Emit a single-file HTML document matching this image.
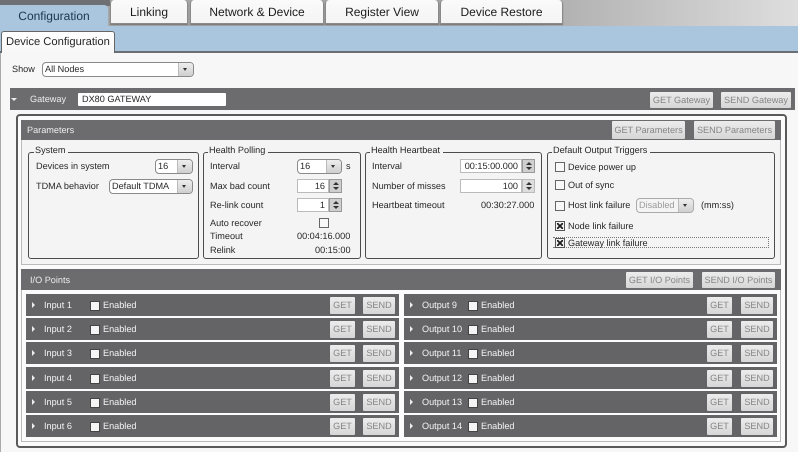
<!DOCTYPE html>
<html><head><meta charset="utf-8"><style>
html,body{margin:0;padding:0}
body{width:798px;height:452px;overflow:hidden;position:relative;background:#f7f7f7;font-family:"Liberation Sans",Arial,sans-serif;font-size:9.15px;color:#262626;text-rendering:geometricPrecision;filter:blur(.3px)}
div,span{position:absolute;box-sizing:border-box}
.t{white-space:nowrap;line-height:12px}
.tab{top:0;height:24px;background:linear-gradient(#fafafa,#f4f4f4);border:1px solid #8a8a8a;border-top:0;border-radius:4px 4px 0 0;font-size:12px;line-height:24px;text-align:center;color:#1c1c1c;box-shadow:0 1px 1px #777}
.bar{background:#6c6c6e}
.btn{background:linear-gradient(#ececec,#d6d6d6);color:#858585;text-align:center;font-size:9.15px;line-height:16px;white-space:nowrap;border-radius:1px}
.fs{border:1px solid #4c4c4c;border-radius:3px;top:152px;height:107px}
.lg{top:144px;background:#f4f4f4;padding:0 3px 0 1px;line-height:12px;white-space:nowrap;color:#262626}
.sel{background:#fff;border:1px solid #8a8a8a;border-radius:4px;overflow:hidden;line-height:11px;padding-left:2px;white-space:nowrap;color:#262626}
.sel i{position:absolute;right:0;top:0;bottom:0;width:14px;background:linear-gradient(#eee,#cfcfcf);border-left:1px solid #bbb}
.sel i:after{content:"";position:absolute;left:4px;top:5px;border:2.5px solid transparent;border-top:3px solid #333;border-bottom:0}
.num{background:#fff;border:1px solid #bbb;text-align:right;padding-right:3px;line-height:12px;color:#262626}
.sp{width:13px;height:14px;background:#cfcfcf;border:1px solid #999}
.sp:before{content:"";position:absolute;left:2.5px;top:1.5px;border:3px solid transparent;border-bottom:3.5px solid #333;border-top:0}
.sp:after{content:"";position:absolute;left:2.5px;top:7px;border:3px solid transparent;border-top:3.5px solid #333;border-bottom:0}
.cb{width:10px;height:10px;background:#f8f8f8;border:1px solid #666}
.cb.x{background:#eee;border-color:#555}
.cb.x:after{content:"";position:absolute;left:1px;top:1px;width:6px;height:6px;background:linear-gradient(45deg,transparent 40%,#222 40%,#222 60%,transparent 60%),linear-gradient(-45deg,transparent 40%,#222 40%,#222 60%,transparent 60%)}
.row{height:22px;background:#646466}
.row b{position:absolute;left:6px;top:8px;border:3px solid transparent;border-left:3px solid #eee;border-right:0}
.row .n{left:18px;top:5px;color:#f4f4f4;line-height:12px;white-space:nowrap}
.row .en{top:5px;color:#f4f4f4;line-height:12px}
.row .c{top:8px;width:8px;height:8px;background:#f4f4f4;box-shadow:0 0 0 1px #444}
.row .g{top:3px;width:25px;height:17px;line-height:16px}
.row .s{top:3px;width:32px;height:17px;line-height:16px}
</style></head><body>
<div style="left:0;top:0;width:798px;height:27px;background:linear-gradient(90deg,#a8a8a8 0,#a4a4a4 65%,#b4b4b4 72%,#dedede 100%)"></div>
<div style="left:0;top:0;width:110px;height:6px;background:#6f7073"></div>
<div class="tab" style="left:110px;width:78px">Linking</div>
<div class="tab" style="left:190px;width:134px">Network &amp; Device</div>
<div class="tab" style="left:325px;width:114px">Register View</div>
<div class="tab" style="left:440px;width:123px">Device Restore</div>
<div style="left:0;top:26px;width:798px;height:27px;background:#a9c6de;border-bottom:2px solid #6b6e72"></div>
<div style="left:0;top:5px;width:108px;height:22px;background:#a9c6de;border-radius:0 4px 0 0;font-size:12px;line-height:23px;text-align:center;color:#1d3550;padding-left:0">Configuration</div>
<div style="left:1px;top:31px;width:114px;height:22px;background:linear-gradient(#fff,#f7f7f7);border:1px solid #666;border-bottom:0;border-radius:3px 3px 0 0;font-size:11.2px;line-height:21px;padding-left:4px;color:#262626;white-space:nowrap">Device Configuration</div>
<div style="left:1px;top:53px;width:797px;height:399px;background:#f7f7f7"></div>
<div style="left:0;top:53px;width:1px;height:399px;background:#aaa"></div>

<div class="t" style="left:12px;top:63px">Show</div>
<div class="sel" style="left:42px;top:62px;width:152px;height:15px;line-height:13px">All Nodes<i></i></div>

<div class="bar" style="left:10px;top:88px;width:785px;height:22px"></div>
<div style="left:11px;top:98px;border:3px solid transparent;border-top:3px solid #eee;border-bottom:0"></div>
<div class="t" style="left:30px;top:93px;color:#eee">Gateway</div>
<div style="left:78px;top:93px;width:148px;height:13px;background:#fff;border-radius:1px;line-height:13px;padding-left:4px;color:#262626;white-space:nowrap">DX80 GATEWAY</div>
<div class="btn" style="left:650px;top:92px;width:63px;height:16px">GET Gateway</div>
<div class="btn" style="left:721px;top:92px;width:70px;height:16px">SEND Gateway</div>

<div style="left:16px;top:114px;width:771px;height:334px;border:2px solid #5a5a5a;border-radius:4px;background:#fbfbfb"></div>
<div style="left:21px;top:120px;width:760px;height:145px;background:#f4f4f4;border:1px solid #bbb"></div>
<div class="bar" style="left:21px;top:120px;width:760px;height:20px"></div>
<div class="t" style="left:27px;top:124px;color:#eee">Parameters</div>
<div class="btn" style="left:612px;top:121px;width:73px;height:18px;line-height:18px">GET Parameters</div>
<div class="btn" style="left:694px;top:121px;width:81px;height:18px;line-height:18px">SEND Parameters</div>

<div class="fs" style="left:28px;width:171px"></div>
<div class="lg" style="left:34px">System</div>
<div class="t" style="left:36px;top:160px">Devices in system</div>
<div class="sel" style="left:155px;top:159px;width:38px;height:15px;line-height:13px">16<i></i></div>
<div class="t" style="left:36px;top:180px">TDMA behavior</div>
<div class="sel" style="left:109px;top:179px;width:84px;height:15px;line-height:13px">Default TDMA<i></i></div>

<div class="fs" style="left:203px;width:158px"></div>
<div class="lg" style="left:208px">Health Polling</div>
<div class="t" style="left:210px;top:160px">Interval</div>
<div class="sel" style="left:297px;top:159px;width:45px;height:15px;line-height:13px">16<i></i></div>
<div class="t" style="left:346px;top:160px">s</div>
<div class="t" style="left:210px;top:180px">Max bad count</div>
<div class="num" style="left:297px;top:179px;width:32px;height:14px">16</div><div class="sp" style="left:329px;top:179px"></div>
<div class="t" style="left:210px;top:199px">Re-link count</div>
<div class="num" style="left:297px;top:198px;width:32px;height:14px">1</div><div class="sp" style="left:329px;top:198px"></div>
<div class="t" style="left:210px;top:217px">Auto recover</div>
<div class="cb" style="left:319px;top:218px"></div>
<div class="t" style="left:210px;top:230px">Timeout</div>
<div class="t" style="left:297px;top:230px">00:04:16.000</div>
<div class="t" style="left:210px;top:244px">Relink</div>
<div class="t" style="left:315px;top:244px">00:15:00</div>

<div class="fs" style="left:365px;width:177px"></div>
<div class="lg" style="left:370px">Health Heartbeat</div>
<div class="t" style="left:372px;top:160px">Interval</div>
<div class="num" style="left:460px;top:159px;width:62px;height:14px">00:15:00.000</div><div class="sp" style="left:522px;top:159px"></div>
<div class="t" style="left:372px;top:180px">Number of misses</div>
<div class="num" style="left:460px;top:179px;width:62px;height:14px">100</div><div class="sp" style="left:522px;top:179px;background:#ddd;border-color:#bbb"></div>
<div class="t" style="left:372px;top:199px">Heartbeat timeout</div>
<div class="t" style="left:481px;top:199px">00:30:27.000</div>

<div class="fs" style="left:547px;width:228px"></div>
<div class="lg" style="left:552px">Default Output Triggers</div>
<div class="cb" style="left:555px;top:162px"></div><div class="t" style="left:568px;top:161px">Device power up</div>
<div class="cb" style="left:555px;top:180px"></div><div class="t" style="left:568px;top:179px">Out of sync</div>
<div class="cb" style="left:555px;top:201px"></div><div class="t" style="left:568px;top:199px">Host link failure</div>
<div class="sel" style="left:636px;top:198px;width:58px;height:15px;line-height:13px;color:#999;border-color:#aaa;background:#f4f4f4">Disabled<i></i></div>
<div class="t" style="left:701px;top:199px">(mm:ss)</div>
<div class="cb x" style="left:555px;top:221px"></div><div class="t" style="left:568px;top:220px">Node link failure</div>
<div style="left:553px;top:237px;width:216px;height:11px;border:1px dotted #777;border-left:0"></div>
<div class="cb x" style="left:555px;top:238px"></div><div class="t" style="left:568px;top:237px">Gateway link failure</div>

<div class="bar" style="left:21px;top:269px;width:760px;height:21px"></div>
<div class="t" style="left:30px;top:274px;color:#eee">I/O Points</div>
<div class="btn" style="left:626px;top:272px;width:67px;height:16px">GET I/O Points</div>
<div class="btn" style="left:702px;top:272px;width:73px;height:16px">SEND I/O Points</div>
<div style="left:21px;top:290px;width:760px;height:152px;border:1px solid #bbb;border-top:0;background:#fbfbfb"></div>

<div class="row" style="left:26px;top:294px;width:373px"><b></b><span class="n">Input 1</span><span class="c" style="left:65px"></span><span class="en" style="left:77px">Enabled</span><span class="btn g" style="left:304px">GET</span><span class="btn s" style="left:337px">SEND</span></div>
<div class="row" style="left:26px;top:318px;width:373px"><b></b><span class="n">Input 2</span><span class="c" style="left:65px"></span><span class="en" style="left:77px">Enabled</span><span class="btn g" style="left:304px">GET</span><span class="btn s" style="left:337px">SEND</span></div>
<div class="row" style="left:26px;top:342px;width:373px"><b></b><span class="n">Input 3</span><span class="c" style="left:65px"></span><span class="en" style="left:77px">Enabled</span><span class="btn g" style="left:304px">GET</span><span class="btn s" style="left:337px">SEND</span></div>
<div class="row" style="left:26px;top:367px;width:373px"><b></b><span class="n">Input 4</span><span class="c" style="left:65px"></span><span class="en" style="left:77px">Enabled</span><span class="btn g" style="left:304px">GET</span><span class="btn s" style="left:337px">SEND</span></div>
<div class="row" style="left:26px;top:391px;width:373px"><b></b><span class="n">Input 5</span><span class="c" style="left:65px"></span><span class="en" style="left:77px">Enabled</span><span class="btn g" style="left:304px">GET</span><span class="btn s" style="left:337px">SEND</span></div>
<div class="row" style="left:26px;top:415px;width:373px"><b></b><span class="n">Input 6</span><span class="c" style="left:65px"></span><span class="en" style="left:77px">Enabled</span><span class="btn g" style="left:304px">GET</span><span class="btn s" style="left:337px">SEND</span></div>

<div class="row" style="left:404px;top:294px;width:373px"><b></b><span class="n">Output 9</span><span class="c" style="left:65px"></span><span class="en" style="left:77px">Enabled</span><span class="btn g" style="left:303px">GET</span><span class="btn s" style="left:337px">SEND</span></div>
<div class="row" style="left:404px;top:318px;width:373px"><b></b><span class="n">Output 10</span><span class="c" style="left:65px"></span><span class="en" style="left:77px">Enabled</span><span class="btn g" style="left:303px">GET</span><span class="btn s" style="left:337px">SEND</span></div>
<div class="row" style="left:404px;top:342px;width:373px"><b></b><span class="n">Output 11</span><span class="c" style="left:65px"></span><span class="en" style="left:77px">Enabled</span><span class="btn g" style="left:303px">GET</span><span class="btn s" style="left:337px">SEND</span></div>
<div class="row" style="left:404px;top:367px;width:373px"><b></b><span class="n">Output 12</span><span class="c" style="left:65px"></span><span class="en" style="left:77px">Enabled</span><span class="btn g" style="left:303px">GET</span><span class="btn s" style="left:337px">SEND</span></div>
<div class="row" style="left:404px;top:391px;width:373px"><b></b><span class="n">Output 13</span><span class="c" style="left:65px"></span><span class="en" style="left:77px">Enabled</span><span class="btn g" style="left:303px">GET</span><span class="btn s" style="left:337px">SEND</span></div>
<div class="row" style="left:404px;top:415px;width:373px"><b></b><span class="n">Output 14</span><span class="c" style="left:65px"></span><span class="en" style="left:77px">Enabled</span><span class="btn g" style="left:303px">GET</span><span class="btn s" style="left:337px">SEND</span></div>
</body></html>
